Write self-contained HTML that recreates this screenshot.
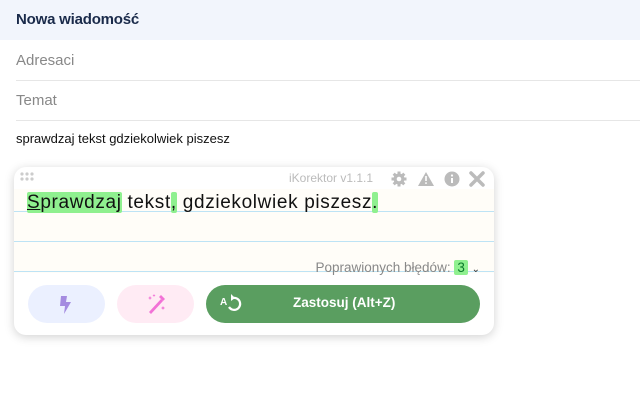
<!DOCTYPE html><html><head><style>
body{margin:0;width:640px;height:400px;background:#fff;font-family:"Liberation Sans",Arial,sans-serif;position:relative;overflow:hidden}
.hdr{position:absolute;left:0;top:0;width:640px;height:40px;background:#f2f5fc;}
.hdr span{position:absolute;left:16px;top:11px;font-size:15px;color:#1a2a4a;font-weight:bold;letter-spacing:-0.2px}
.f{position:absolute;left:16px;right:0;height:40px;border-bottom:1px solid #e6e6e6;color:#888;font-size:15px}
.f span{position:absolute;top:12px}
.body{position:absolute;left:16px;top:131px;font-size:13px;color:#111}
.pan{position:absolute;left:14px;top:167px;width:480px;height:168px;background:#fff;border-radius:12px;box-shadow:0 2px 10px rgba(0,0,0,.18);overflow:hidden}
.ta{position:absolute;left:0;top:22px;width:480px;height:84px;background:#fffdf8}
.ln{position:absolute;left:0;width:480px;height:1px;background:#bde3f5}
.txt{position:absolute;left:13px;top:25px;font-size:19px;letter-spacing:0.65px;color:#111;white-space:pre}
.g{background:#8ff08f;border-radius:2px}
.ver{position:absolute;left:275px;top:4px;font-size:12px;color:#bbb}
.cnt{position:absolute;right:14px;top:93px;font-size:13.5px;color:#888}
.btn{position:absolute;top:118px;height:38px;border-radius:19px}
</style></head><body>
<div class="hdr"><span>Nowa wiadomość</span></div>
<div class="f" style="top:40px"><span>Adresaci</span></div>
<div class="f" style="top:80px"><span>Temat</span></div>
<div class="body">sprawdzaj tekst gdziekolwiek piszesz</div>
<div class="pan">
<svg style="position:absolute;left:6px;top:5px" width="16" height="10"><g fill="#ccc"><circle cx="2" cy="2" r="1.6"/><circle cx="7" cy="2" r="1.6"/><circle cx="12" cy="2" r="1.6"/><circle cx="2" cy="7" r="1.6"/><circle cx="7" cy="7" r="1.6"/><circle cx="12" cy="7" r="1.6"/></g></svg>
<div class="ver">iKorektor v1.1.1</div>
<svg style="position:absolute;left:377px;top:4px" width="98" height="16" viewBox="0 0 98 16"><g fill="#bbb"><circle cx="8" cy="8" r="5.5"/><g stroke="#bbb" stroke-width="3"><line x1="8" y1="0.5" x2="8" y2="15.5"/><line x1="0.5" y1="8" x2="15.5" y2="8"/><line x1="2.7" y1="2.7" x2="13.3" y2="13.3"/><line x1="13.3" y1="2.7" x2="2.7" y2="13.3"/></g><circle cx="8" cy="8" r="2.3" fill="#fff"/><path d="M35 1L43 15H27Z"/><circle cx="61" cy="8" r="7.5"/></g><path d="M80 2L92 14M92 2L80 14" stroke="#bbb" stroke-width="3.5" stroke-linecap="round"/><rect x="34.2" y="5" width="1.6" height="5" fill="#fff"/><rect x="34.2" y="11.3" width="1.6" height="1.6" fill="#fff"/><rect x="60" y="7" width="2" height="5" fill="#fff"/><circle cx="61" cy="4.5" r="1.1" fill="#fff"/></svg>
<div class="ta"><div class="ln" style="top:22px"></div><div class="ln" style="top:52px"></div><div class="ln" style="top:82px"></div></div>
<div class="txt"><span class="g"><u>S</u>prawdzaj</span> tekst<span class="g">,</span> gdziekolwiek piszesz<span class="g">.</span></div>
<div class="cnt">Poprawionych błędów: <span style="background:#8ff08f;color:#0a7a2a;padding:0 3px;border-radius:2px">3</span> <span style="color:#333;font-size:10px">&#8964;</span></div>
<div class="btn" style="left:14px;width:77px;background:#ebf0ff"><svg style="position:absolute;left:31px;top:10px" width="14" height="20" viewBox="0 0 14 20"><path d="M2 1h6l-1 6h5L5 19l1-8H1z" fill="#a48be0"/></svg></div>
<div class="btn" style="left:103px;width:77px;background:#ffebf4"><svg style="position:absolute;left:28px;top:8px" width="22" height="22" viewBox="0 0 22 22"><path d="M4 19L16 6l2 2L6 21z" fill="#f272d6"/><path d="M14 4l2-2 4 4-2 2z" fill="#f272d6"/><path d="M5 3l.7 1.5L7 5l-1.3.5L5 7l-.7-1.5L3 5l1.3-.5zM9 1l.5 1 1 .5-1 .5L9 4l-.5-1-1-.5 1-.5zM18 13l.6 1.3 1.4.7-1.4.7L18 17l-.6-1.3L16 15l1.4-.7z" fill="#f272d6"/></svg></div>
<div class="btn" style="left:192px;width:274px;background:#5a9e60;color:#fff"><svg style="position:absolute;left:14px;top:8px" width="22" height="22" viewBox="0 0 22 22"><text x="0" y="12" font-size="10" font-weight="bold" fill="#fff" font-family="Liberation Sans">A</text><path d="M9 14a6 6 0 1 0 4-9" stroke="#fff" stroke-width="2.2" fill="none"/><path d="M11 1l4 4-4 3z" fill="#fff"/></svg><span style="position:absolute;left:87px;top:10px;font-size:13.5px;font-weight:bold">Zastosuj (Alt+Z)</span></div>
</div>
</body></html>
